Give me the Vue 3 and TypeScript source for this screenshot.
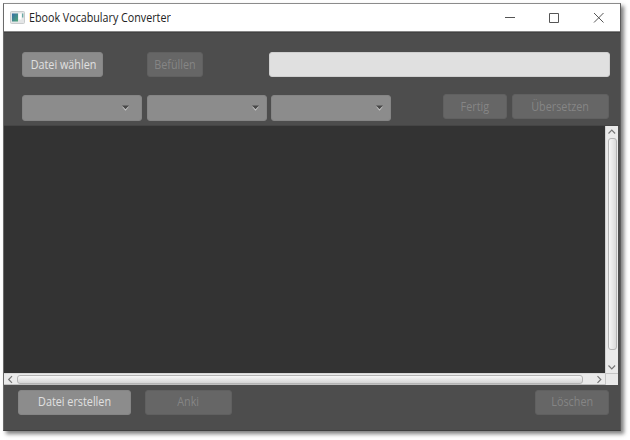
<script setup lang="ts">
import { ref } from 'vue'

const title = 'Ebook Vocabulary Converter'
const vocabulary = ref<string>('')
const combos: string[] = ['source', 'target', 'book']
</script>

<template>
  <div class="desktop">
    <main class="window">
      <header class="titlebar">
        <svg class="app-icon" width="15" height="13" viewBox="0 0 15 13">
          <defs>
            <linearGradient id="screen" x1="0" y1="0" x2="1" y2="1">
              <stop offset="0" stop-color="#356fa8" />
              <stop offset="1" stop-color="#53a777" />
            </linearGradient>
          </defs>
          <rect x=".5" y=".5" width="14" height="12" rx="1" fill="#e4e6e7" stroke="#c9cccd" />
          <rect x="2" y="2.500" width="6" height="8" fill="url(#screen)" />
          <rect x="8.500" y="2.500" width="3" height="6" fill="#fff" />
          <rect x="12" y="2.500" width="1.300" height="4" fill="#69aaa5" />
        </svg>
        <div class="title"><span>{{ title }}</span></div>
        <svg class="controls" width="104" height="12" viewBox="0 0 104 12" fill="none" stroke="#555">
          <path d="M1 5.500h10M45.500 1.500h9v9h-9z" />
          <path d="M90 1l9.500 9.500M99.500 1L90 10.500" />
        </svg>
      </header>
      <section class="row row-file">
        <button class="btn choose"><span>Datei wählen</span></button>
        <button class="btn fill" disabled><span>Befüllen</span></button>
        <input v-model="vocabulary" class="field" />
      </section>
      <section class="row row-language">
        <div v-for="name in combos" :key="name" class="combo" :class="name">
          <svg width="7" height="6" viewBox="0 0 7 6">
            <path d="M0 1.500h7L3.500 5.800z" fill="#c8c8c8" />
            <path d="M0 .5h7L3.500 4.300z" fill="#484848" />
          </svg>
        </div>
        <button class="btn done" disabled><span>Fertig</span></button>
        <button class="btn translate" disabled><span>Übersetzen</span></button>
      </section>
      <section class="list">
        <div class="canvas"></div>
        <div class="vbar">
          <svg width="12" height="12" viewBox="0 0 12 12"><path d="M2.500 7.500l3.300-3.300 3.300 3.300" /></svg>
          <div class="vthumb"></div>
          <svg width="12" height="12" viewBox="0 0 12 12"><path d="M2.500 4.500l3.300 3.300 3.300-3.300" /></svg>
        </div>
        <div class="hbar">
          <svg width="12" height="12" viewBox="0 0 12 12"><path d="M8 2.200l-3.300 3.300 3.300 3.300" /></svg>
          <div class="hthumb"></div>
          <svg width="12" height="12" viewBox="0 0 12 12"><path d="M5.500 2.200l3.300 3.300-3.300 3.300" /></svg>
        </div>
        <div class="corner"></div>
      </section>
      <footer class="row row-actions">
        <button class="btn create"><span>Datei erstellen</span></button>
        <button class="btn anki" disabled><span>Anki</span></button>
        <button class="btn delete" disabled><span>Löschen</span></button>
      </footer>
    </main>
  </div>
</template>

<style>
body {
  background: #fff;
  overflow: hidden;
}
</style>

<style scoped>
* {
  box-sizing: border-box;
}
.desktop {
  width: 630px;
  height: 440px;
  padding: 3px;
  font-family: "Open Sans", "Noto Sans", sans-serif;
}
.window {
  width: 618px;
  height: 428px;
  border: 1px solid #3f3f3f;
  border-top-color: #8b8b8b;
  border-left-color: #6a6a6a;
  border-right-color: #5c5c5c;
  background: #4d4d4d;
  box-shadow: 3px 3px 4px rgba(0, 0, 0, .5);
}
.titlebar {
  height: 28px;
  padding: 0 12px 0 5px;
  display: flex;
  align-items: center;
  background: #fff;
  border-bottom: 1px solid #858585;
}
.app-icon {
  flex: none;
  margin: 0 4px 1px 1px;
}
.title {
  flex: 1;
  font-size: 12px;
  line-height: 20px;
  color: #222;
  white-space: nowrap;
}
.title span {
  display: inline-block;
  transform: scaleX(.893);
  transform-origin: left center;
}
.controls {
  flex: none;
}
.row {
  display: flex;
}
.row-file {
  padding: 19px 10px 0 18px;
  height: 63px;
  border-top: 1px solid #424242;
}
.row-language {
  height: 31px;
  padding: 0 11px 0 18px;
  border-bottom: 1px solid #454545;
}
.row-actions {
  padding: 5px 11px 0 14px;
}
.btn {
  height: 25px;
  padding: 0;
  border: 1px solid #858585;
  border-radius: 3px;
  background: #8c8c8c;
  color: #e0e0e0;
  font-family: inherit;
  font-size: 12px;
  line-height: 23px;
  text-align: center;
  white-space: nowrap;
}
.btn span {
  display: inline-block;
  transform: scaleX(.9);
}
.choose span,
.fill span {
  margin: 0 -6px;
}
.row-actions .btn {
  padding-bottom: 2px;
  line-height: 21px;
}
.btn:disabled {
  color: #858585;
  background: #666;
  border-color: #606060;
}
.choose {
  width: 81px;
  padding-left: 1px;
}
.fill {
  width: 56px;
  margin-left: 44px;
}
.field {
  width: 341px;
  height: 25px;
  margin-left: auto;
  padding: 0 6px;
  border: 1px solid #cfcfcf;
  border-radius: 3px;
  outline: none;
  background: #e0e0e0;
}
.combo {
  width: 120px;
  height: 26px;
  margin-right: 4.500px;
  padding-right: 7px;
  display: flex;
  align-items: center;
  justify-content: flex-end;
  border: 1px solid #858585;
  border-radius: 3px;
  background: #8c8c8c;
}
.combo.source {
  padding-right: 12px;
}
.done {
  width: 64px;
  margin: -1px 5px 0 auto;
}
.translate {
  width: 97px;
  margin-top: -1px;
}
.list {
  width: 614px;
  display: grid;
  grid-template: 247px 12px / 601px 13px;
}
.canvas {
  background: #333;
}
.vbar,
.hbar {
  display: flex;
  background: #eaeaea;
}
.vbar {
  flex-direction: column;
  border-left: 1px solid #d2d2d2;
}
.vbar svg,
.hbar svg {
  flex: none;
  fill: none;
  stroke: #777;
  stroke-width: 1.200;
}
.vthumb {
  width: 9px;
  height: 212px;
  margin: 0 1px 11px 2px;
  border: 1px solid #b4b4b4;
  border-radius: 3px;
  background: linear-gradient(90deg, #f6f6f6, #dadada);
}
.hbar {
  border-top: 1px solid #d8d8d8;
  border-bottom: 1px solid #c0c0c0;
}
.hthumb {
  width: 566px;
  height: 9px;
  margin: 1px 9px 0 1px;
  border: 1px solid #b4b4b4;
  border-radius: 3px;
  background: linear-gradient(#f8f8f8, #d5d5d5);
}
.corner {
  background: #e9e9e9;
  border-top: 1px solid #c5c5c5;
  border-left: 1px solid #c5c5c5;
}
.create {
  width: 113px;
}
.anki {
  width: 87px;
  margin-left: 14px;
}
.delete {
  width: 74px;
  margin-left: auto;
}
</style>
